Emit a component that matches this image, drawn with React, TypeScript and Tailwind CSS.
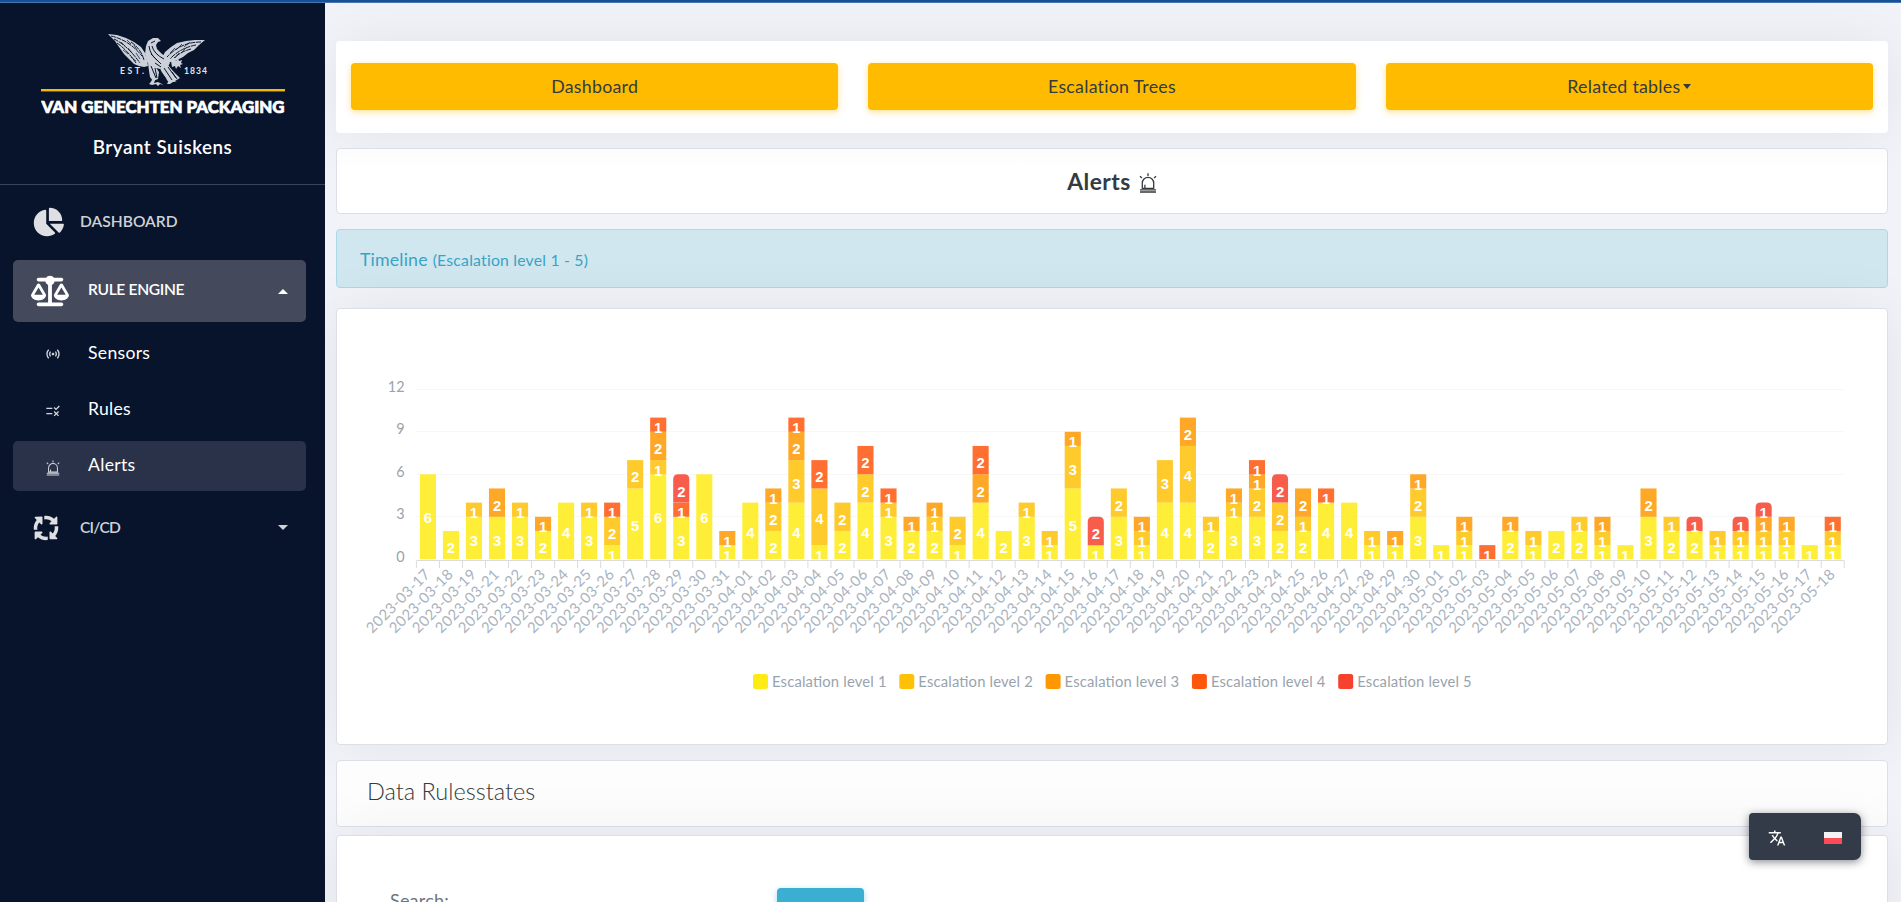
import React from "react";
import { FaChartPie, FaScaleBalanced, FaArrowsSpin } from "react-icons/fa6";
import { MdSensors, MdRule, MdTranslate } from "react-icons/md";

const COLORS = ["#ffeb14", "#ffc107", "#ff9800", "#ff560d", "#f7412d"];

const DATA: [string, number[]][] = [
  ["2023-03-17", [6]],
  ["2023-03-18", [2]],
  ["2023-03-19", [3, 1]],
  ["2023-03-21", [3, 0, 2]],
  ["2023-03-22", [3, 1]],
  ["2023-03-23", [2, 0, 1]],
  ["2023-03-24", [4]],
  ["2023-03-25", [3, 1]],
  ["2023-03-26", [1, 2, 0, 1]],
  ["2023-03-27", [5, 2]],
  ["2023-03-28", [6, 1, 2, 1]],
  ["2023-03-29", [3, 0, 0, 1, 2]],
  ["2023-03-30", [6]],
  ["2023-03-31", [1, 0, 1]],
  ["2023-04-01", [4]],
  ["2023-04-02", [2, 2, 1]],
  ["2023-04-03", [4, 3, 2, 1]],
  ["2023-04-04", [1, 4, 0, 2]],
  ["2023-04-05", [2, 2]],
  ["2023-04-06", [4, 2, 0, 2]],
  ["2023-04-07", [3, 1, 0, 1]],
  ["2023-04-08", [2, 0, 1]],
  ["2023-04-09", [2, 1, 1]],
  ["2023-04-10", [1, 2]],
  ["2023-04-11", [4, 0, 2, 2]],
  ["2023-04-12", [2]],
  ["2023-04-13", [3, 1]],
  ["2023-04-14", [1, 1]],
  ["2023-04-15", [5, 3, 1]],
  ["2023-04-16", [1, 0, 0, 0, 2]],
  ["2023-04-17", [3, 2]],
  ["2023-04-18", [1, 1, 1]],
  ["2023-04-19", [4, 3]],
  ["2023-04-20", [4, 4, 2]],
  ["2023-04-21", [2, 1]],
  ["2023-04-22", [3, 1, 1]],
  ["2023-04-23", [3, 2, 1, 1]],
  ["2023-04-24", [2, 2, 0, 0, 2]],
  ["2023-04-25", [2, 1, 2]],
  ["2023-04-26", [4, 0, 0, 1]],
  ["2023-04-27", [4]],
  ["2023-04-28", [1, 1]],
  ["2023-04-29", [1, 0, 1]],
  ["2023-04-30", [3, 2, 1]],
  ["2023-05-01", [1]],
  ["2023-05-02", [1, 1, 1]],
  ["2023-05-03", [0, 0, 0, 1]],
  ["2023-05-04", [2, 0, 1]],
  ["2023-05-05", [1, 1]],
  ["2023-05-06", [2]],
  ["2023-05-07", [2, 1]],
  ["2023-05-08", [1, 1, 1]],
  ["2023-05-09", [1]],
  ["2023-05-10", [3, 0, 2]],
  ["2023-05-11", [2, 1]],
  ["2023-05-12", [2, 0, 0, 0, 1]],
  ["2023-05-13", [1, 1]],
  ["2023-05-14", [1, 1, 0, 0, 1]],
  ["2023-05-15", [1, 1, 1, 0, 1]],
  ["2023-05-16", [1, 1, 1]],
  ["2023-05-17", [1]],
  ["2023-05-18", [1, 1, 0, 1]],
];

const X0 = 79.4;
const STEP = 23.03;
const BASE = 250.3;
const UNIT = 14.17;
const BAR = 16.1;
const LABEL_DROP = [0, 9.2, 8.8, 8.2, 7.8, 7.4, 7.1];

function Chart() {
  const end = X0 + STEP * DATA.length;
  return (
    <svg width="1550" height="435" viewBox="0 0 1550 435" className="block">
      {[0, 3, 6, 9, 12].map((v) => (
        <g key={v}>
          {v > 0 && (
            <rect x={X0} y={Math.round(BASE - v * UNIT - 0.4)} width={end - X0} height="1" fill="#f7f7f8" />
          )}
          <text x="67.5" y={BASE - v * UNIT + 2.6} textAnchor="end" fontSize="14.4" fill="#99a3ad">
            {v}
          </text>
        </g>
      ))}
      {DATA.map(([date, values], i) => {
        const cx = X0 + STEP * (i + 0.5);
        const left = cx - BAR / 2;
        let level = 0;
        return (
          <g key={date}>
            {values.map((v, s) => {
              if (!v) return null;
              const y = BASE - (level + v) * UNIT;
              const h = v * UNIT;
              level += v;
              return s === 4 ? (
                <path
                  key={s}
                  d={`M${left} ${y + h}V${y + 5}q0-5 5-5h${BAR - 10}q5 0 5 5V${y + h}z`}
                  fill={COLORS[s]}
                  fillOpacity="0.85"
                />
              ) : (
                <rect key={s} x={left} y={y} width={BAR} height={h} fill={COLORS[s]} fillOpacity="0.85" />
              );
            })}
          </g>
        );
      })}
      <g fontFamily="'Liberation Sans', Arial, sans-serif" fontWeight="700" fontSize="14.8" fill="#fff" textAnchor="middle">
        {DATA.map(([date, values], i) => {
          let level = 0;
          return values.map((v, s) => {
            if (!v) return null;
            const mid = BASE - (level + v / 2) * UNIT;
            level += v;
            return (
              <text key={date + s} x={X0 + STEP * (i + 0.5)} y={mid + LABEL_DROP[v] - 0.6}>
                {v}
              </text>
            );
          });
        })}
      </g>
      <rect x={X0} y={BASE} width={end - X0} height="3" fill="#fff" />
      <rect x={X0} y="251" width={end - X0} height="1" fill="#dcdcdc" />
      {Array.from({ length: DATA.length + 1 }, (_, i) => (
        <rect key={i} x={X0 + STEP * i - 0.5} y="252" width="1" height="7" fill="#dcdcdc" />
      ))}
      {DATA.map(([date], i) => {
        const x = X0 + STEP * (i + 0.5) + 3;
        return (
          <text
            key={date}
            transform={`translate(${x} 266.3) rotate(-45)`}
            textAnchor="end"
            fontSize="14.8"
            textLength="83"
            fill="#a9b3be"
          >
            {date}
          </text>
        );
      })}
      {COLORS.map((c, i) => (
        <g key={c}>
          <rect x={416 + i * 146.3} y="365" width="15" height="15" rx="2.5" fill={c} />
          <text x={435 + i * 146.3} y="378.3" fontSize="14.8" textLength="114.5" fill="#99a3ad">
            Escalation level {i + 1}
          </text>
        </g>
      ))}
    </svg>
  );
}

function Siren({ className }: { className: string }) {
  return (
    <svg viewBox="0 0 18 20" className={className} fill="none" stroke="currentColor" strokeWidth="1.3">
      <path d="M3.3 15.3V10a5.7 5.7 0 0 1 11.4 0v5.3z" />
      <path d="M5.9 15.2v-3.4" />
      <path d="M1 16.9h16M1 19h16" />
      <path d="M9 .3v2.6M1 3.2l1.9 1.7M17 3.2l-1.9 1.7" />
    </svg>
  );
}

function Eagle() {
  return (
    <svg width="244" height="86" viewBox="0 0 244 86" className="block">
      <g fill="#ccd0d9">
        <path d="M67 1l9 1 9 3 8 4 7 5 4 6 2 7 1 6-4 1-5-1-5-2-4-4-6-6-5-7-4-6z" />
        <path d="M164 7l-10 0-9 1-9 2-6 4-6 5-3 6 4 4 5 0 6-2 6-3 5-4 6-3 5-5z" />
        <path d="M105 13l2-5 5-3 5 0 3 3-3 1-2 3 1 4 5 5 6 4 2 5-3 5-7 1-8-2-5-5-2-8z" />
        <path d="M107 30l7 3 4 6-1 7-5 2-3-4-1-6z" />
        <path d="M119 33l8-1 5 6 7 7-5 3-6 2-4-6-4-5z" />
        <path d="M130 28l3-3 2 3 2-3 1 3 3-1-1 3 2 1-3 1 1 3-3-2-2 3-1-3-3 1z" />
        <path d="M109 50l2-3 3 0-1 3 4-1 6 3-4-1-2 2-2-2-4 1-3-1zM127 49l6-1 3 1-4 0-3 2-3 0z" />
      </g>
      <g fill="none" stroke="#07142b" strokeWidth="1">
        <path d="M70 3q18 4 31 20M73 6q13 6 26 24M76 10q10 7 19 20M90 9q10 7 13 18" strokeDasharray="5 .8" />
        <path d="M86 7l4 4M93 12l3 5M80 9l4 4M87 15l4 5M95 20l4 6M82 17l5 4M90 24l5 4" strokeWidth=".7" />
        <path d="M160 9q-20 0-34 15M155 12q-16 3-26 14M150 16q-9 2-17 9" strokeDasharray="5 .8" />
        <path d="M149 9l-6 5M141 11l-6 6M134 15l-5 5M145 15l-5 5M138 20l-4 5" strokeWidth=".7" />
        <path d="M110 10l4-2M108 13q1 9 9 15M111 13q2 8 12 13M110 21l10 10M114 30l6 4M110 33l5 12M114 35l2 10M123 35l8 12M127 34l8 11M131 39l5 7M119 37l6 9" />
      </g>
      <g fill="#e2e4e9" fontFamily="Lato, sans-serif" fontWeight="700" fontSize="8.6">
        <text x="79" y="41" textLength="24">EST.</text>
        <text x="143" y="41" textLength="23">1834</text>
      </g>
      <rect y="56" width="244" height="2.4" fill="#f9b808" />
      <text x="0.5" y="80" fontFamily="Lato, sans-serif" fontWeight="900" fontSize="16.4" textLength="243" lengthAdjust="spacingAndGlyphs" fill="#fff" stroke="#fff" strokeWidth="0.7">
        VAN GENECHTEN PACKAGING
      </text>
    </svg>
  );
}

function Caret({ up }: { up?: boolean }) {
  return (
    <svg width="10" height="5" viewBox="0 0 10 5" className="ml-auto mr-[18px] fill-current">
      <path d={up ? "M0 5L5 0l5 5z" : "M0 0h10L5 5z"} />
    </svg>
  );
}

function Sidebar() {
  return (
    <aside className="relative z-10 flex w-[325px] shrink-0 flex-col bg-[#07142b] text-white">
      <div className="flex h-[182px] flex-col items-center border-b border-[#39435a] pt-[30px]">
        <Eagle />
        <div className="mt-3 text-[18.8px] leading-[32px] font-semibold tracking-[0.55px]">Bryant Suiskens</div>
      </div>
      <nav className="flex flex-col pr-[19px] pl-[13px] text-[17.6px]">
        <div className="flex h-[75px] items-center pb-[2px] text-[#cfd1d7]">
          <FaChartPie className="ml-[19px] size-[32px] text-[#dedfe3]" />
          <span className="ml-4 text-[15.6px] font-semibold">DASHBOARD</span>
        </div>
        <div className="flex h-[62px] items-center rounded-[5px] bg-[#444a5c]">
          <FaScaleBalanced className="ml-[18px] size-[38px]" />
          <span className="ml-[19px] pb-[2px] text-[15.6px] font-semibold tracking-[-0.35px]">RULE ENGINE</span>
          <Caret up />
        </div>
        <div className="mt-[7px] flex h-[50px] items-center">
          <MdSensors className="ml-[32px] size-4 text-[#d4d6dc]" />
          <span className="ml-[27px] pb-[2px] tracking-[0.3px]">Sensors</span>
        </div>
        <div className="mt-[6px] flex h-[50px] items-center">
          <MdRule className="mt-px ml-[32px] size-4 text-[#d4d6dc]" />
          <span className="ml-[27px] pb-[2px] tracking-[0.3px]">Rules</span>
        </div>
        <div className="mt-[6px] flex h-[50px] items-center rounded-[5px] bg-[#293249]">
          <Siren className="mt-[3px] ml-[33px] h-4 w-[14px] text-[#d4d6dc]" />
          <span className="ml-[28px] pb-[2px] tracking-[0.3px]">Alerts</span>
        </div>
        <div className="flex h-[73px] items-center text-[#cfd1d7]">
          <FaArrowsSpin className="ml-[19px] size-[28px] text-[#dedfe3]" />
          <span className="ml-5 text-[15.6px] font-semibold tracking-[-0.8px]">CI/CD</span>
          <Caret />
        </div>
      </nav>
    </aside>
  );
}

function NavButton({ children }: { children: React.ReactNode }) {
  return (
    <button className="flex h-[47px] flex-1 items-center justify-center rounded-[4px] bg-[#ffbb00] text-[17.8px] tracking-[0.25px] text-[#343a40] shadow-[0_2px_6px_rgba(255,187,0,0.45)]">
      {children}
    </button>
  );
}

export default function App() {
  return (
    <div className="flex h-[902px] w-[1901px] flex-col overflow-hidden bg-[#f2f3f8] font-[Lato,'Noto_Sans',sans-serif] text-[#343a40]">
      <div className="relative z-10 h-[3px] shrink-0 border-b border-[#4578b2] bg-[#194f96]" />
      <div className="flex min-h-0 flex-1">
        <Sidebar />
        <main className="flex flex-1 flex-col pr-[13px] pl-[11px]">
          <section className="mt-[38px] flex h-[92px] shrink-0 items-start gap-[30px] rounded-[4px] bg-white px-[15px] pt-[22px] shadow-[0_0_60px_rgba(4,9,20,0.065)]">
            <NavButton>Dashboard</NavButton>
            <NavButton>Escalation Trees</NavButton>
            <NavButton>
              Related tables
              <svg width="8" height="5" viewBox="0 0 8 5" className="ml-[3px] fill-current">
                <path d="M0 0h8L4 5z" />
              </svg>
            </NavButton>
          </section>
          <section className="mt-[15px] flex h-[66px] shrink-0 items-center justify-center rounded-[4px] border border-[#dcdfe5] bg-linear-to-b from-[#fcfcfc] to-white to-30% text-[22.8px] font-bold tracking-[0.5px]">
            <span>Alerts</span>
            <Siren className="mt-1 ml-2 h-5 w-[18px]" />
          </section>
          <section className="mt-[15px] flex h-[59px] shrink-0 items-center rounded-[4px] border border-[#acd9e8] bg-[#d0e7ef] pt-[2px] pl-[23px] text-[17.8px] text-[#3aa3c4]">
            <span className="tracking-[0.15px]">Timeline</span>
            <span className="ml-[5px] text-[15.8px] tracking-[0.2px]">(Escalation level 1 - 5)</span>
          </section>
          <section className="mt-5 h-[437px] shrink-0 rounded-[4px] border border-[#dcdfe5] bg-white shadow-[0_0_60px_rgba(4,9,20,0.065)]">
            <Chart />
          </section>
          <section className="mt-[15px] flex h-[67px] shrink-0 items-center rounded-[4px] border border-[#dcdfe5] bg-[#fdfdfd] pb-[3px] pl-[30px] text-[23.5px] font-light">
            Data Rulesstates
          </section>
          <section className="mt-2 flex h-[120px] shrink-0 items-start rounded-[4px] border border-[#dcdfe5] bg-white pt-[52px] pl-[53px] shadow-[0_0_60px_rgba(4,9,20,0.065)]">
            <label className="w-[387px] text-[18px] leading-[25px] tracking-[0.2px] text-[#6c757d]">Search:</label>
            <div className="h-[38px] w-[87px] rounded-[4px] bg-[#3aafd2] shadow-[0_2px_6px_rgba(58,175,210,0.45)]" />
          </section>
        </main>
      </div>
      <div className="fixed top-[813px] left-[1749px] z-20 flex h-[47px] w-[112px] items-center rounded-[4px] rounded-r-[7px] bg-[#333a48] shadow-[0_2px_8px_rgba(20,25,40,0.5)]">
        <div className="flex w-14 justify-center pt-[3px]">
          <MdTranslate className="size-[18px] text-white" />
        </div>
        <div className="flex w-14 justify-center pt-[3px]">
          <div className="h-3 w-[18px] border-b-[6px] border-[#fb4a58] bg-[#f3f3f3]" />
        </div>
      </div>
    </div>
  );
}
